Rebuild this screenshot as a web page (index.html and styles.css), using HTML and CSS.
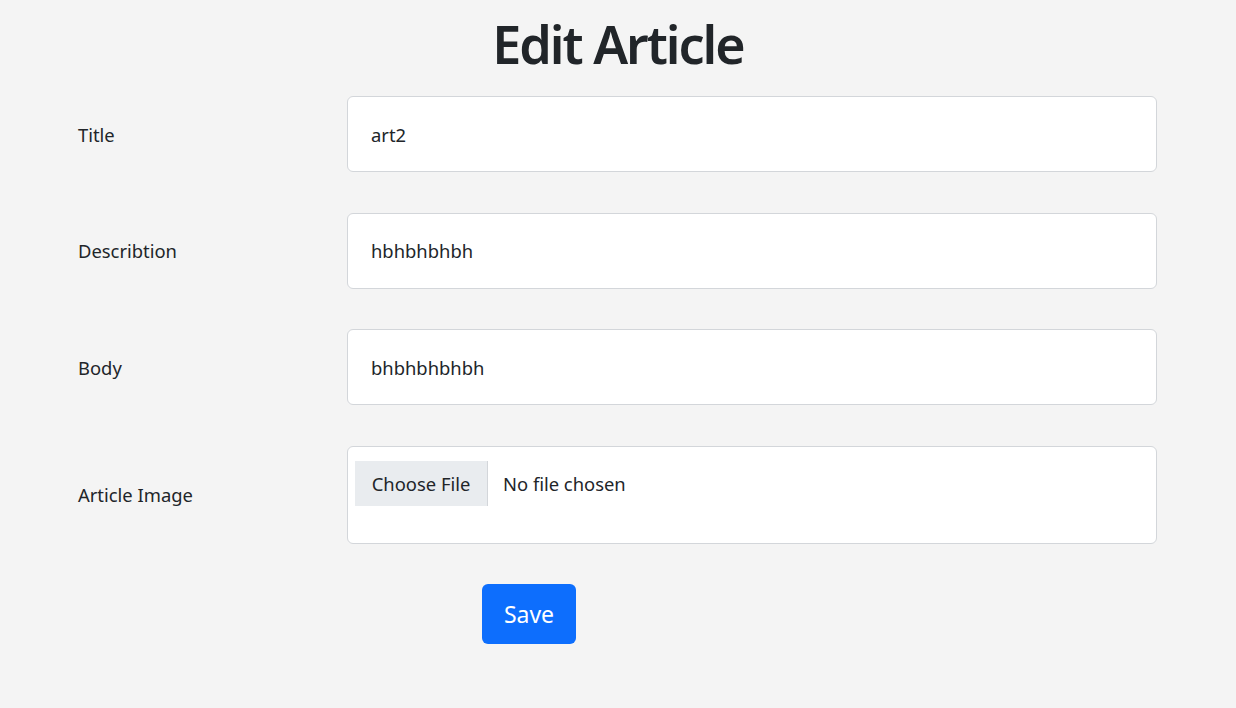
FILE: index.html
```html
<!DOCTYPE html>
<html lang="en">
<head>
<meta charset="utf-8">
<title>Edit Article</title>
<link rel="stylesheet" href="styles.css">
</head>
<body>
<main class="page">
  <h1 class="title">Edit Article</h1>
  <form class="form">
    <div class="row">
      <label class="label">Title</label>
      <div class="field">art2</div>
    </div>
    <div class="row">
      <label class="label">Describtion</label>
      <div class="field">hbhbhbhbh</div>
    </div>
    <div class="row">
      <label class="label">Body</label>
      <div class="field">bhbhbhbhbh</div>
    </div>
    <div class="row">
      <label class="label">Article Image</label>
      <div class="field file">
        <span class="file-btn">Choose File</span>
        <span class="file-name">No file chosen</span>
      </div>
    </div>
    <div class="actions">
      <button type="button" class="save">Save</button>
    </div>
  </form>
</main>
</body>
</html>
```

FILE: styles.css
```css
* { box-sizing: border-box; }
html, body { margin: 0; padding: 0; }
body {
  background: #f4f4f4;
  color: #212529;
  font-family: "Noto Sans", "Open Sans", sans-serif;
  width: 1236px;
  height: 708px;
  overflow: hidden;
}
.page {
  padding-top: 10px;
}
.title {
  margin: 0;
  text-align: center;
  font-size: 52px;
  font-weight: 600;
  line-height: 68px;
  letter-spacing: -2px;
}
.form {
  margin-top: 18px;
  padding-left: 78px;
  width: 1157px;
}
.row {
  display: flex;
  align-items: center;
  margin-bottom: 40.6px;
}
.label {
  width: 269px;
  flex: none;
  font-size: 18.4px;
}
.field {
  flex: 1;
  height: 76px;
  background: #fff;
  border: 1px solid #d3d6da;
  border-radius: 6px;
  padding: 0 23px;
  display: flex;
  align-items: center;
  font-size: 18.4px;
}
.field.file {
  height: 98px;
  align-items: flex-start;
  padding: 14px 7px;
}
.file-btn {
  background: #e9ecef;
  border-right: 1px solid #d3d6da;
  height: 45px;
  width: 133px;
  display: flex;
  align-items: center;
  justify-content: center;
}
.file-name {
  height: 45px;
  display: flex;
  align-items: center;
  margin-left: 15px;
}
.actions {
  padding-left: 404px;
}
.save {
  background: #0d6efd;
  color: #fff;
  border: 0;
  border-radius: 6px;
  width: 94px;
  height: 60px;
  font-family: inherit;
  font-size: 23px;
  padding: 0;
}
```
